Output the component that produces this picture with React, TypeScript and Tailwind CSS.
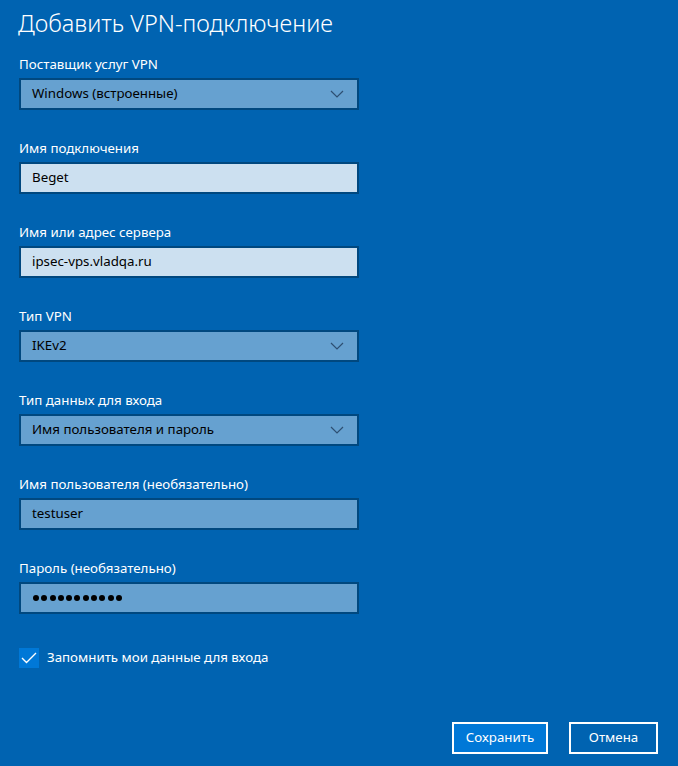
import React from 'react';

type Field =
  | { kind: 'select'; label: string; value: string }
  | { kind: 'text'; label: string; value: string; filled?: boolean }
  | { kind: 'password'; label: string; length: number };

const fields: Field[] = [
  { kind: 'select', label: 'Поставщик услуг VPN', value: 'Windows (встроенные)' },
  { kind: 'text', label: 'Имя подключения', value: 'Beget', filled: true },
  { kind: 'text', label: 'Имя или адрес сервера', value: 'ipsec-vps.vladqa.ru', filled: true },
  { kind: 'select', label: 'Тип VPN', value: 'IKEv2' },
  { kind: 'select', label: 'Тип данных для входа', value: 'Имя пользователя и пароль' },
  { kind: 'text', label: 'Имя пользователя (необязательно)', value: 'testuser' },
  { kind: 'password', label: 'Пароль (необязательно)', length: 11 },
];

const Chevron = () => (
  <svg width="14" height="8" viewBox="0 0 14 8" className="text-[#2e4f72]">
    <path d="M1 1l6 6 6-6" fill="none" stroke="currentColor" strokeWidth="1.2" />
  </svg>
);

const FieldBox: React.FC<{ field: Field }> = ({ field }) => {
  const light = field.kind === 'text' && field.filled;
  return (
    <div
      className={`flex h-[32px] w-[340px] items-center border-2 border-[#00487f] pl-[11px] pr-[13px] text-[13.3px] text-black ${
        light ? 'bg-[#cce0f0]' : 'bg-[#66a1d0]'
      }`}
    >
      {field.kind === 'password' ? (
        <span className="flex gap-[2.3px] pl-[1px]">
          {Array.from({ length: field.length }).map((_, i) => (
            <span key={i} className="h-[6px] w-[6px] rounded-full bg-black" />
          ))}
        </span>
      ) : (
        <span className="flex-1">{field.value}</span>
      )}
      {field.kind === 'select' && <Chevron />}
    </div>
  );
};

export default function App() {
  return (
    <div
      className="flex h-[766px] w-[678px] flex-col bg-[#0063b1] text-white"
      style={{ fontFamily: '"Noto Sans", "Open Sans", sans-serif' }}
    >
      <h1 className="pl-[18px] pt-[7px] text-[23.5px] font-light leading-[32px]">
        Добавить VPN-подключение
      </h1>

      <div className="mt-[17px] flex flex-col gap-[30px] pl-[19px]">
        {fields.map((f) => (
          <div key={f.label} className="flex flex-col gap-[5px]">
            <label className="text-[13.3px] leading-[17px]">{f.label}</label>
            <FieldBox field={f} />
          </div>
        ))}
      </div>

      <label className="ml-[19px] mt-[34px] flex items-center gap-[8px] text-[13.3px]">
        <span className="flex h-[20px] w-[20px] items-center justify-center bg-[#0078d7]">
          <svg width="16" height="12" viewBox="0 0 16 12">
            <path d="M1 6l4.5 4.5L15 1" fill="none" stroke="white" strokeWidth="1.4" />
          </svg>
        </span>
        Запомнить мои данные для входа
      </label>

      <div className="mt-auto flex justify-end gap-[21px] pb-[12px] pr-[20px]">
        <button className="h-[32px] w-[96px] border-2 border-white bg-[#0078d7] text-[13.3px] text-white">
          Сохранить
        </button>
        <button className="h-[32px] w-[89px] border-2 border-white text-[13.3px] text-white">
          Отмена
        </button>
      </div>
    </div>
  );
}
